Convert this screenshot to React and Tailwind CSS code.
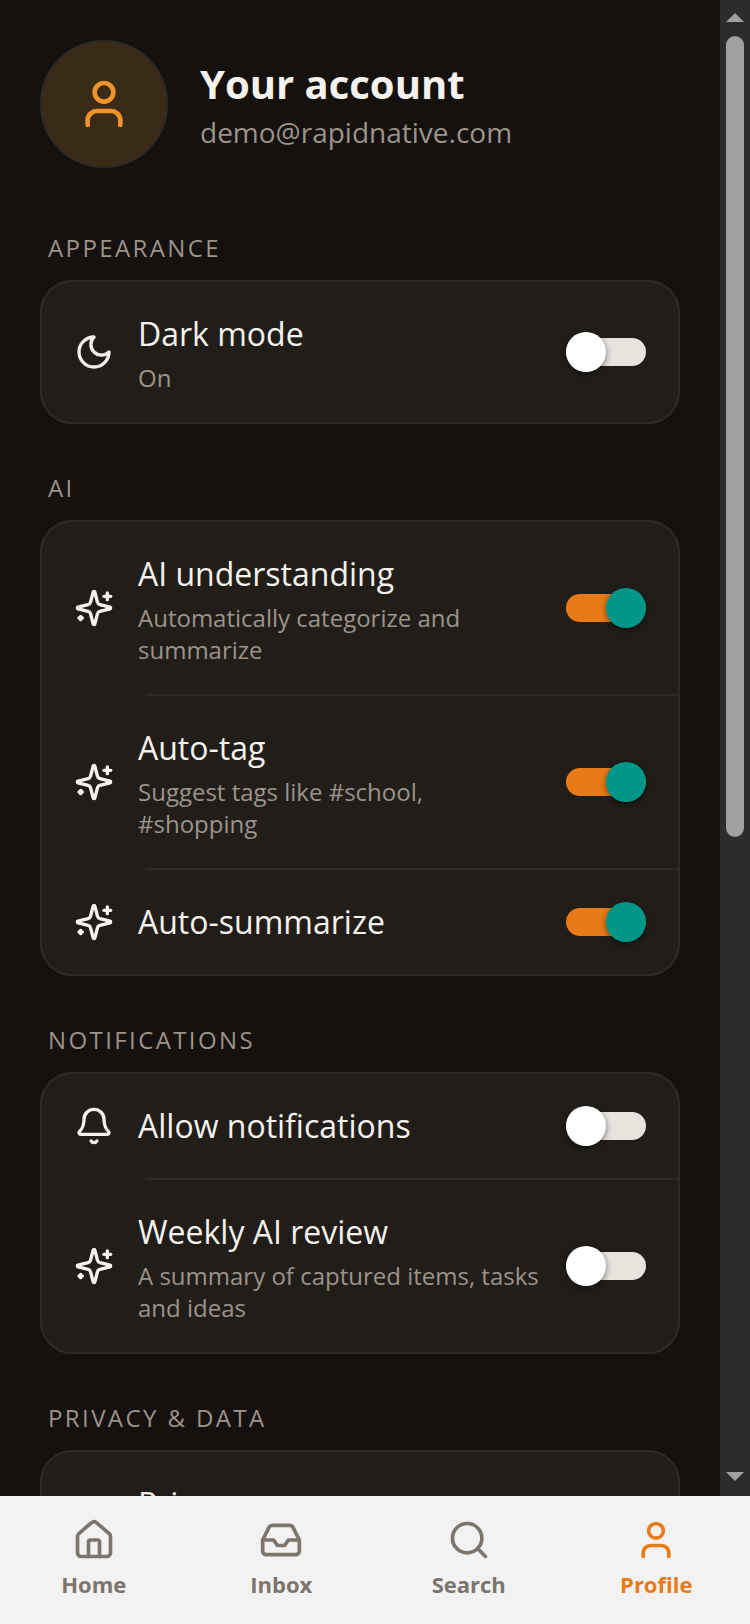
import { useState } from 'react'
import { Bell, House, Inbox, Search, User } from 'lucide-react'

const Icon = ({ children }) => (
  <svg
    viewBox="0 0 24 24"
    fill="none"
    stroke="currentColor"
    strokeWidth="2"
    strokeLinecap="round"
    strokeLinejoin="round"
    className="size-10 shrink-0"
    aria-hidden="true"
  >
    {children}
  </svg>
)

const MoonIcon = () => (
  <Icon>
    <path d="M12 3a6 6 0 0 0 9 9 9 9 0 1 1-9-9Z" />
  </Icon>
)

const SparklesIcon = () => (
  <Icon>
    <path d="M9.937 15.5A2 2 0 0 0 8.5 14.063l-6.135-1.582a.5.5 0 0 1 0-.962L8.5 9.936A2 2 0 0 0 9.937 8.5l1.582-6.135a.5.5 0 0 1 .963 0L14.063 8.5A2 2 0 0 0 15.5 9.937l6.135 1.581a.5.5 0 0 1 0 .964L15.5 14.063a2 2 0 0 0-1.437 1.437l-1.582 6.135a.5.5 0 0 1-.963 0z" />
    <path d="M20 3v4" />
    <path d="M22 5h-4" />
    <path d="M4 17v2" />
    <path d="M5 18H3" />
  </Icon>
)

const BellIcon = () => <Bell className="size-10 shrink-0" />

const sections = [
  {
    title: 'Appearance',
    rows: [{ id: 'dark', icon: MoonIcon, label: 'Dark mode', hint: 'On', on: false }],
  },
  {
    title: 'AI',
    rows: [
      { id: 'understanding', icon: SparklesIcon, label: 'AI understanding', hint: 'Automatically categorize and summarize', on: true },
      { id: 'tag', icon: SparklesIcon, label: 'Auto-tag', hint: 'Suggest tags like #school, #shopping', on: true },
      { id: 'summarize', icon: SparklesIcon, label: 'Auto-summarize', on: true },
    ],
  },
  {
    title: 'Notifications',
    rows: [
      { id: 'notify', icon: BellIcon, label: 'Allow notifications', on: false },
      { id: 'weekly', icon: SparklesIcon, label: 'Weekly AI review', hint: 'A summary of captured items, tasks and ideas', on: false },
    ],
  },
]

const tabs = [
  { label: 'Home', icon: House },
  { label: 'Inbox', icon: Inbox },
  { label: 'Search', icon: Search },
  { label: 'Profile', icon: User, active: true },
]

function Switch({ id, defaultOn }) {
  const [on, setOn] = useState(defaultOn)

  return (
    <span className="relative flex h-10 w-20 shrink-0 items-center">
      <input
        id={id}
        type="checkbox"
        role="switch"
        checked={on}
        onChange={(e) => setOn(e.target.checked)}
        className="h-7 w-full cursor-pointer appearance-none rounded-full bg-[#e7e3dd] checked:bg-[#e87b18]"
      />
      <span
        className={
          on
            ? 'pointer-events-none absolute right-0 size-10 rounded-full bg-[#009688] shadow-[0_2px_6px_rgba(0,0,0,0.5)]'
            : 'pointer-events-none absolute left-0 size-10 rounded-full bg-white shadow-[0_2px_6px_rgba(0,0,0,0.5)]'
        }
      />
    </span>
  )
}

function Row({ row }) {
  const RowIcon = row.icon

  return (
    <div className="flex items-center gap-6 px-8 py-7">
      <RowIcon />
      <label htmlFor={row.id} className="min-w-0 flex-1">
        <span className="block text-[32px] leading-12">{row.label}</span>
        {row.hint && <span className="mt-1 block text-2xl text-[#9c9389]">{row.hint}</span>}
      </label>
      <Switch id={row.id} defaultOn={row.on} />
    </div>
  )
}

function Section({ title, children }) {
  return (
    <section>
      <h2 className="mb-4 px-2 text-2xl tracking-widest text-[#9c9389] uppercase">{title}</h2>
      <div className="overflow-hidden rounded-[32px] border-2 border-[#2e2a27] bg-[#211e1a]">{children}</div>
    </section>
  )
}

function ScrollRail() {
  return (
    <div className="flex w-[30px] shrink-0 flex-col bg-[#2c2c2c]" aria-hidden="true">
      <div className="flex h-9 shrink-0 justify-center pt-[13px]">
        <svg viewBox="0 0 18 9" className="h-[9px] w-[18px]" fill="#a0a0a0">
          <path d="M9 0l9 9H0z" />
        </svg>
      </div>
      <div className="flex flex-1 justify-center">
        <div className="h-9/16 w-[18px] rounded-full bg-[#a0a0a0]" />
      </div>
      <div className="flex h-9 shrink-0 items-start justify-center pt-3">
        <svg viewBox="0 0 18 9" className="h-[9px] w-[18px]" fill="#a0a0a0">
          <path d="M0 0h18L9 9z" />
        </svg>
      </div>
    </div>
  )
}

export default function App() {
  return (
    <div className="flex h-screen flex-col bg-[#14110e] font-['Open_Sans','Noto_Sans',sans-serif] text-[#f5f2ed]">
      <div className="flex min-h-0 flex-1">
        <main className="min-w-0 flex-1 overflow-y-auto p-10 [scrollbar-width:none]">
          <header className="mb-16 flex items-center gap-8">
            <div className="flex size-32 shrink-0 items-center justify-center rounded-full border-2 border-[#2e2a27] bg-[#3a2a18] text-[#f0922b]">
              <User className="size-14" />
            </div>
            <div className="min-w-0">
              <h1 className="text-[40px] leading-14 font-bold">Your account</h1>
              <p className="text-[28px] leading-10 text-[#9c9389]">demo@rapidnative.com</p>
            </div>
          </header>

          <div className="space-y-12">
            {sections.map((section) => (
              <Section key={section.title} title={section.title}>
                {section.rows.map((row, i) => (
                  <div key={row.id}>
                    {i > 0 && <div className="ml-26 h-0.5 bg-[#2e2a27]" />}
                    <Row row={row} />
                  </div>
                ))}
              </Section>
            ))}
            <Section title="Privacy & Data">
              <a href="#privacy" className="block py-7 pr-8 pl-24 text-[32px] leading-12">
                Privacy
              </a>
            </Section>
          </div>
        </main>
        <ScrollRail />
      </div>

      <nav className="grid h-32 shrink-0 grid-cols-4 bg-[#f2f2f2] text-[#7c756d]">
        {tabs.map(({ label, icon: TabIcon, active }) => (
          <a
            key={label}
            href={`#${label.toLowerCase()}`}
            aria-current={active ? 'page' : undefined}
            className={
              active
                ? 'flex flex-col items-center gap-2 pt-[22px] text-[22px] leading-7 font-bold text-[#e87b18]'
                : 'flex flex-col items-center gap-2 pt-[22px] text-[22px] leading-7 font-bold'
            }
          >
            <TabIcon className="size-11" />
            {label}
          </a>
        ))}
      </nav>
    </div>
  )
}
